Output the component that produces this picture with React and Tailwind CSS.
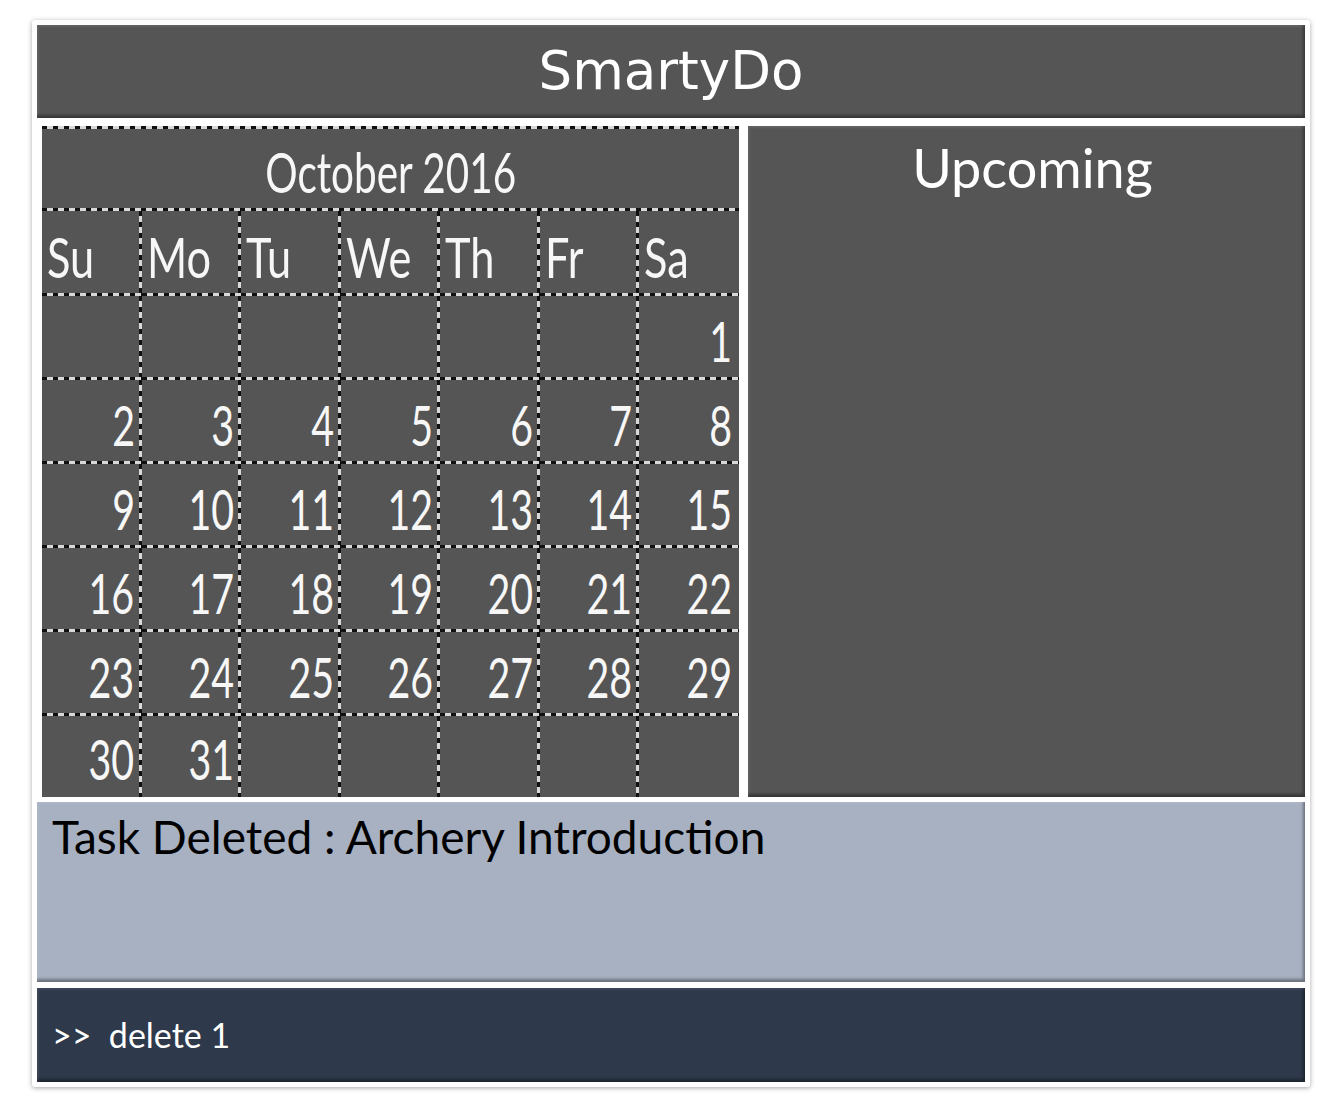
import React from "react";

const days = ["Su", "Mo", "Tu", "We", "Th", "Fr", "Sa"];

// October 2016 starts on a Saturday
const weeks = [
    ["", "", "", "", "", "", "1"],
    ["2", "3", "4", "5", "6", "7", "8"],
    ["9", "10", "11", "12", "13", "14", "15"],
    ["16", "17", "18", "19", "20", "21", "22"],
    ["23", "24", "25", "26", "27", "28", "29"],
    ["30", "31", "", "", "", "", ""],
];

const bevel =
    "shadow-[inset_-2px_-3px_3px_rgba(0,0,0,0.35),inset_2px_2px_2px_rgba(255,255,255,0.08)]";

// dashed black / light grid lines drawn as background layers
const lineRB =
    "[background:repeating-linear-gradient(90deg,#111_0_5px,#d8d8d8_5px_11px)_left_bottom/100%_3px_no-repeat,repeating-linear-gradient(180deg,#111_0_5px,#d8d8d8_5px_11px)_right_top/3px_100%_no-repeat,#555]";
const lineB =
    "[background:repeating-linear-gradient(90deg,#111_0_5px,#d8d8d8_5px_11px)_left_bottom/100%_3px_no-repeat,#555]";
const lineR =
    "[background:repeating-linear-gradient(180deg,#111_0_5px,#d8d8d8_5px_11px)_right_top/3px_100%_no-repeat,#555]";
const lineTB =
    "[background:repeating-linear-gradient(90deg,#111_0_5px,#d8d8d8_5px_11px)_left_top/100%_3px_no-repeat,repeating-linear-gradient(90deg,#111_0_5px,#d8d8d8_5px_11px)_left_bottom/100%_3px_no-repeat,#555]";

function cellLines(r, c) {
    if (r < 6 && c < 6) return lineRB;
    if (r < 6) return lineB;
    if (c < 6) return lineR;
    return "bg-[#555]";
}

function Calendar() {
    const rows = [days, ...weeks];
    return (
        <div className="w-[697px] h-[671px] flex flex-col font-['Lato',sans-serif] text-[#f7f7f7]">
            {/* Month title */}
            <div className={`${lineTB} h-[85px] flex items-center justify-center pt-[6px]`}>
                <span className="inline-block scale-x-[0.71] text-[57px] leading-none whitespace-nowrap">
                    October 2016
                </span>
            </div>

            {/* Day names + dates */}
            <div className="grid grid-cols-7 grid-rows-[85px_84px_84px_84px_84px_84px_81px]">
                {rows.map((row, r) =>
                    row.map((label, c) => (
                        <div
                            key={`${r}-${c}`}
                            className={`${cellLines(r, c)} flex items-center ${
                                r === 0 ? "justify-start pl-[5px] pt-[5px]" : "justify-end pr-[7px] pt-[4px]"
                            }`}
                        >
                            {label && (
                                <span
                                    className={`inline-block text-[57px] leading-none ${
                                        r === 0 ? "origin-left scale-x-[0.76]" : "origin-right scale-x-[0.69]"
                                    }`}
                                >
                                    {label}
                                </span>
                            )}
                        </div>
                    ))
                )}
            </div>
        </div>
    );
}

export default function App() {
    return (
        <div className="min-h-screen bg-white">
            <div className="ml-[32px] pt-[20px] w-[1278px]">
                <div className="bg-white p-[5px] flex flex-col rounded-[3px] shadow-[0_1px_5px_rgba(0,0,0,0.35)]">
                    {/* Header */}
                    <div className={`h-[93px] bg-[#555555] ${bevel} flex items-center justify-center`}>
                        <h1 className="text-white text-[53px] leading-none pb-[2px] font-['Comic_Sans_MS','DejaVu_Sans',sans-serif]">
                            SmartyDo
                        </h1>
                    </div>

                    {/* Calendar + Upcoming */}
                    <div className="mt-[8px] pl-[5px] flex gap-[9px] h-[671px]">
                        <Calendar />
                        <div className={`flex-1 bg-[#555555] ${bevel} flex justify-center pt-[10px] pl-[12px]`}>
                            <h2 className="text-white text-[54px] leading-[1.2] font-['Lato',sans-serif]">
                                Upcoming
                            </h2>
                        </div>
                    </div>

                    {/* Feedback */}
                    <div className={`mt-[5px] h-[180px] bg-[#a7b1c2] ${bevel} px-[15px] pt-[7px]`}>
                        <p className="text-black text-[46px] leading-[1.2] font-['Lato',sans-serif]">
                            Task Deleted : Archery Introduction
                        </p>
                    </div>

                    {/* Command line */}
                    <div className={`mt-[6px] h-[94px] bg-[#2e394b] ${bevel} flex items-center px-[15px]`}>
                        <p className="text-white text-[34px] leading-none font-['Lato',sans-serif] whitespace-pre">
                            {">>  delete 1"}
                        </p>
                    </div>
                </div>
            </div>
        </div>
    );
}
